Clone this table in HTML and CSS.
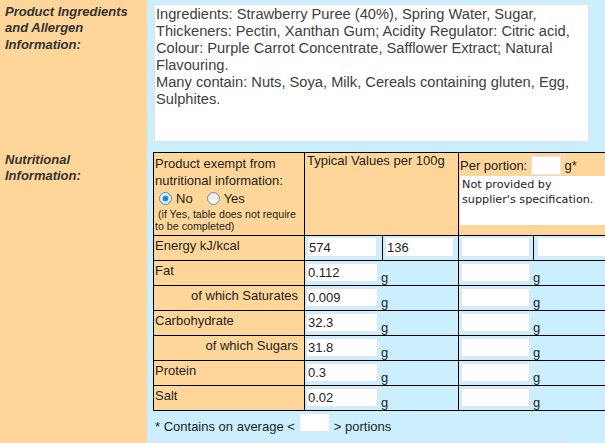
FILE: index.html
```html
<!DOCTYPE html>
<html>
<head>
<meta charset="utf-8">
<title>Product information</title>
<link rel="stylesheet" href="styles.css">
</head>
<body>
<div class="form">
  <div class="row">
    <div class="label">Product Ingredients and Allergen Information:</div>
    <div class="field field-ing">
      <textarea class="ingredients" readonly>Ingredients: Strawberry Puree (40%), Spring Water, Sugar, Thickeners: Pectin, Xanthan Gum; Acidity Regulator: Citric acid, Colour: Purple Carrot Concentrate, Safflower Extract; Natural Flavouring.
Many contain: Nuts, Soya, Milk, Cereals containing gluten, Egg, Sulphites.</textarea>
    </div>
  </div>
  <div class="row">
    <div class="label">Nutritional Information:</div>
    <div class="field field-nut">
      <table class="nut">
        <colgroup><col class="c1"><col class="c2"><col class="c3"><col class="c4"><col class="c5"></colgroup>
        <tr class="head">
          <td class="exempt">
            <div class="exempt-q">Product exempt from nutritional information:</div>
            <div class="radios">
              <label class="opt"><input class="radio" type="radio" name="ex" checked>No</label>
              <label class="opt"><input class="radio" type="radio" name="ex">Yes</label>
            </div>
            <div class="note">&nbsp;(if Yes, table does not require to be completed)</div>
          </td>
          <td colspan="2" class="typical">Typical Values per 100g</td>
          <td colspan="2" class="portion">
            <div class="portion-line">Per portion: <input class="in w30" type="text"> g*</div>
            <div class="notice">Not provided by<br>supplier's specification.</div>
          </td>
        </tr>
        <tr class="r">
          <td class="lbl">Energy kJ/kcal</td>
          <td class="e"><input class="in h20 w70" type="text" value="574"></td>
          <td class="e"><input class="in h20 w69" type="text" value="136"></td>
          <td class="e"><input class="in h20 w69" type="text"></td>
          <td class="e e5"><input class="in h20 w72" type="text"></td>
        </tr>
        <tr class="r">
          <td class="lbl">Fat</td>
          <td colspan="2" class="v"><div class="val"><input class="in w72" type="text" value="0.112"><span class="unit">g</span></div></td>
          <td colspan="2" class="v p"><div class="val"><input class="in w69" type="text"><span class="unit">g</span></div></td>
        </tr>
        <tr class="r">
          <td class="lbl sub">of which Saturates</td>
          <td colspan="2" class="v"><div class="val"><input class="in w72" type="text" value="0.009"><span class="unit">g</span></div></td>
          <td colspan="2" class="v p"><div class="val"><input class="in w69" type="text"><span class="unit">g</span></div></td>
        </tr>
        <tr class="r">
          <td class="lbl">Carbohydrate</td>
          <td colspan="2" class="v"><div class="val"><input class="in w72" type="text" value="32.3"><span class="unit">g</span></div></td>
          <td colspan="2" class="v p"><div class="val"><input class="in w69" type="text"><span class="unit">g</span></div></td>
        </tr>
        <tr class="r">
          <td class="lbl sub">of which Sugars</td>
          <td colspan="2" class="v"><div class="val"><input class="in w72" type="text" value="31.8"><span class="unit">g</span></div></td>
          <td colspan="2" class="v p"><div class="val"><input class="in w69" type="text"><span class="unit">g</span></div></td>
        </tr>
        <tr class="r">
          <td class="lbl">Protein</td>
          <td colspan="2" class="v"><div class="val"><input class="in w72" type="text" value="0.3"><span class="unit">g</span></div></td>
          <td colspan="2" class="v p"><div class="val"><input class="in w69" type="text"><span class="unit">g</span></div></td>
        </tr>
        <tr class="r">
          <td class="lbl">Salt</td>
          <td colspan="2" class="v"><div class="val"><input class="in w72" type="text" value="0.02"><span class="unit">g</span></div></td>
          <td colspan="2" class="v p"><div class="val"><input class="in w69" type="text"><span class="unit">g</span></div></td>
        </tr>
      </table>
      <div class="foot">
        <span>* Contains on average &lt;</span>
        <input class="in w31" type="text">
        <span>&gt; portions</span>
      </div>
      <div class="next"></div>
    </div>
  </div>
</div>
</body>
</html>
```

FILE: styles.css
```css
html, body {
  margin: 0;
  padding: 0;
  overflow: hidden;
  background: #ccefff;
}

.form {
  font-family: "Liberation Sans", Arial, sans-serif;
  font-size: 13px;
  color: #1e1e1e;
}

.row {
  display: grid;
  grid-template-columns: 147px 1fr;
}

.label {
  background: #ffd699;
  padding: 4px 5px;
  font-weight: bold;
  font-style: italic;
  font-size: 13px;
  line-height: 16.3px;
  color: #333;
}

.field {
  background: #ccefff;
  padding: 4px 0 0 6px;
}

.field-ing {
  padding-bottom: 6px;
}

.ingredients {
  display: block;
  box-sizing: border-box;
  width: 435px;
  height: 138px;
  margin: 0 0 0 1px;
  padding: 1px 1px;
  border: 1px solid #dde3e7;
  background: #fff;
  color: #404040;
  font-family: "Liberation Sans", Arial, sans-serif;
  font-size: 14.67px;
  line-height: 17px;
  resize: none;
  overflow: hidden;
  outline: none;
}

.nut {
  border-collapse: collapse;
  table-layout: fixed;
  width: 460px;
  border: 1px solid #000;
}

.c1 { width: 151px; }
.c2 { width: 78px; }
.c3 { width: 76px; }
.c4 { width: 75px; }
.c5 { width: 80px; }

.nut td {
  border: 1px solid #000;
  vertical-align: top;
  padding: 0;
}

.head { height: 83px; }
.r { height: 25px; }

.head td {
  background: #ffd699;
}

.exempt {
  padding: 2px 1px 0 1px !important;
}

.exempt-q {
  line-height: 17px;
}

.radios {
  display: flex;
  align-items: center;
  height: 19px;
}

.opt {
  display: flex;
  align-items: center;
  margin-right: 10px;
}

.radio {
  appearance: none;
  -webkit-appearance: none;
  box-sizing: border-box;
  width: 13px;
  height: 13px;
  margin: 0 4px 0 4px;
  border-radius: 50%;
  border: 1px solid #8a8a8a;
  background: linear-gradient(#e6e6e6, #fcfcfc);
}

.radio:checked {
  border-color: #4f86b8;
  background: radial-gradient(circle, #1d88de 0, #1d88de 2.6px, #d4ecfb 3.2px, #d4ecfb 4.6px, #f4faff 5.2px);
}

.note {
  font-size: 10.67px;
  line-height: 12px;
}

.typical {
  padding: 0 0 0 2px !important;
}

.portion {
  padding: 3px 0 0 1px !important;
}

.portion-line {
  white-space: nowrap;
}

.portion-line .in {
  vertical-align: baseline;
}

.notice {
  box-sizing: border-box;
  height: 49px;
  margin-top: 1px;
  margin-right: 2px;
  padding: 1px 2px;
  background: #fff;
  font-family: "DejaVu Sans", Verdana, sans-serif;
  font-size: 11.2px;
  line-height: 15px;
  color: #222;
}

.lbl {
  background: #ffd699;
  padding: 2px 1px 0 1px !important;
  white-space: nowrap;
}

.lbl.sub {
  text-align: right;
  padding-right: 6px !important;
}

.e {
  background: #ccefff;
  padding: 1px 0 0 2px !important;
}

.e5 { padding-left: 3px !important; }

.v {
  background: #ccefff;
  padding: 2px 0 0 1px !important;
}

.v.p { padding-left: 2px !important; }

.val {
  display: flex;
  align-items: flex-end;
}

.unit {
  line-height: 13px;
  margin: 0 0 -2px 3px;
}

.in {
  box-sizing: border-box;
  height: 19px;
  margin: 0;
  padding: 0 1px;
  border: 1px solid #e1e6ea;
  background: #fff;
  font-family: "Liberation Sans", Arial, sans-serif;
  font-size: 13px;
  color: #222;
  outline: none;
}

.h20 { height: 20px; }
.w30 { width: 30px; }
.w31 { width: 31px; }
.w69 { width: 69px; }
.w70 { width: 70px; }
.w72 { width: 72px; }

.foot {
  display: flex;
  align-items: flex-end;
  gap: 4px;
  margin-top: 2px;
  padding-left: 2px;
  line-height: 15px;
}

.foot span {
  margin-bottom: -2px;
}

.next {
  box-sizing: border-box;
  width: 416px;
  height: 30px;
  margin: 10px 0 0 -1px;
  background: #fff;
  border: 1px solid #dde3e7;
}
```
